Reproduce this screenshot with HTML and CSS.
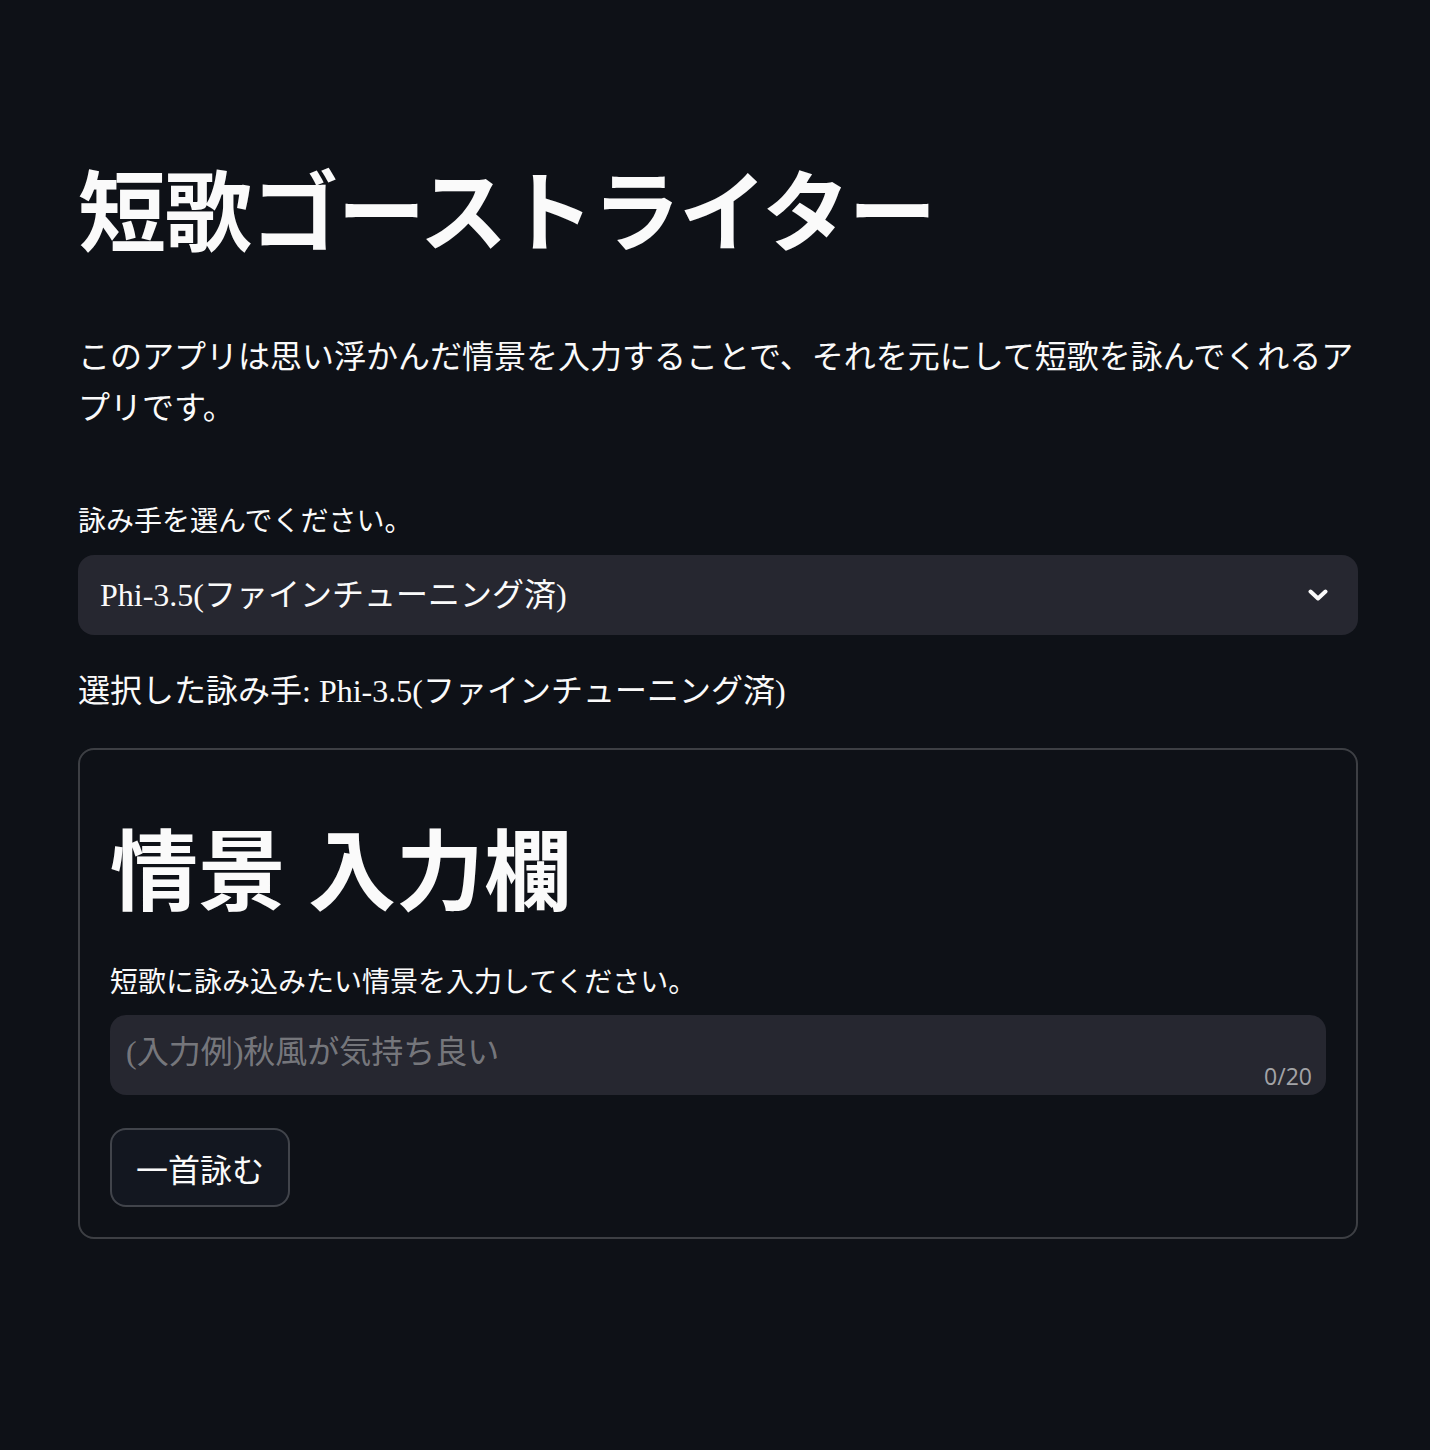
FILE: index.html
```html
<!DOCTYPE html>
<html lang="ja">
<head>
    <title>短歌ゴーストライター</title>
    <meta charset="utf-8">
    <meta name="viewport" content="width=device-width, initial-scale=1">
    <link rel="stylesheet" href="styles.css">
</head>
<body>
    <div class="main">
        <h1 class="title">短歌ゴーストライター</h1>
        <p class="lead">このアプリは思い浮かんだ情景を入力することで、それを元にして短歌を詠んでくれるアプリです。</p>

        <!-- 詠み手の選択 -->
        <label class="field-label">詠み手を選んでください。</label>
        <div class="select">
            <span class="select-value">Phi-3.5(ファインチューニング済)</span>
            <svg class="chevron" width="20" height="12" viewBox="0 0 20 12">
                <path d="M2.5 2.5 L10 9.5 L17.5 2.5" fill="none" stroke="#fafafa" stroke-width="4" stroke-linecap="round" stroke-linejoin="round"/>
            </svg>
        </div>
        <p class="selected">選択した詠み手: Phi-3.5(ファインチューニング済)</p>

        <!-- 情景の入力フォーム -->
        <form class="card" onsubmit="return false">
            <h1 class="card-title">情景 入力欄</h1>
            <label class="field-label" for="scene">短歌に詠み込みたい情景を入力してください。</label>
            <div class="text-input">
                <input type="text" id="scene" maxlength="20" placeholder="(入力例)秋風が気持ち良い">
                <span class="counter">0/20</span>
            </div>
            <button type="submit">一首詠む</button>
        </form>
    </div>
</body>
</html>
```

FILE: styles.css
```css
body {
    margin: 0;
    background-color: #0e1117;
    color: #fafafa;
    font-family: "Liberation Serif", "Noto Sans CJK JP", serif;
}

.main {
    width: 1280px;
    margin-left: 78px;
    padding-top: 162px;
    padding-bottom: 200px;
}

h1 {
    margin: 0;
    font-size: 88px;
    font-weight: 700;
    line-height: 1.2;
}

.title {
    letter-spacing: -1.5px;
}

.lead {
    margin: 64px 0 0;
    font-size: 32px;
    line-height: 1.6;
}

.field-label {
    display: block;
    font-size: 28px;
    line-height: 1.6;
    margin-bottom: 10px;
}

.main > .field-label {
    margin-top: 66px;
}

.select {
    display: flex;
    align-items: center;
    justify-content: space-between;
    height: 80px;
    box-sizing: border-box;
    padding: 0 30px 0 22px;
    background-color: #262730;
    border-radius: 16px;
    font-size: 32px;
}

.select-value {
    margin-bottom: 6px;
}

.selected {
    margin: 31px 0 0;
    font-size: 32px;
    line-height: 1.6;
}

.card {
    margin-top: 31px;
    padding: 71px 30px 30px;
    border: 2px solid rgba(250, 250, 250, 0.2);
    border-radius: 16px;
}

.card .field-label {
    margin-top: 34px;
}

.text-input {
    position: relative;
    height: 80px;
    background-color: #262730;
    border-radius: 16px;
}

.text-input input {
    width: 100%;
    height: 100%;
    box-sizing: border-box;
    padding: 0 80px 6px 16px;
    border: none;
    background: transparent;
    color: #fafafa;
    font-family: inherit;
    font-size: 32px;
    outline: none;
}

.text-input input::placeholder {
    color: rgba(250, 250, 250, 0.4);
}

.counter {
    position: absolute;
    right: 14px;
    bottom: 3px;
    font-family: "Open Sans", sans-serif;
    font-size: 23px;
    color: rgba(250, 250, 250, 0.6);
}

button {
    display: block;
    margin-top: 33px;
    height: 79px;
    padding: 0 24px;
    background-color: #131720;
    color: #fafafa;
    border: 2px solid rgba(250, 250, 250, 0.2);
    border-radius: 16px;
    font-family: inherit;
    font-size: 32px;
    cursor: pointer;
}
```
